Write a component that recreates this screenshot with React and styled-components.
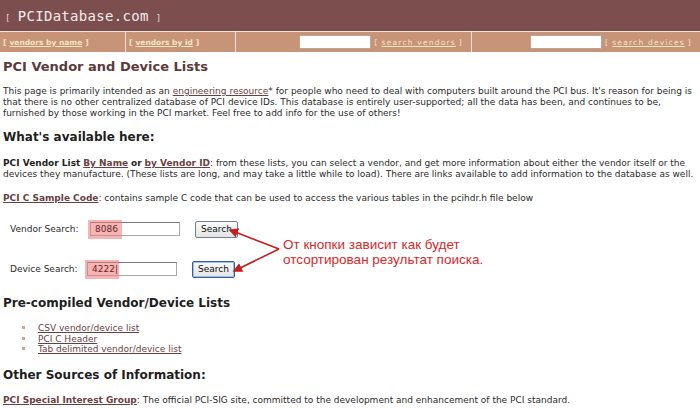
import React from 'react';
import styled, { createGlobalStyle } from 'styled-components';

const GlobalStyle = createGlobalStyle`
    html, body { margin: 0; padding: 0; background: #fff; }
    body {
        font-family: "DejaVu Sans", Verdana, sans-serif;
        font-size: 9px;
        color: #2b2b2b;
    }
`;

const Header = styled.div`
    height: 31px;
    background: #7d4e4e;
    border-bottom: 1px solid #efe3dc;
    display: flex;
    align-items: center;
    padding-left: 5px;
    color: #f4ecec;
`;

const Logo = styled.span`
    font-family: "DejaVu Sans Mono", "Liberation Mono", monospace;
    font-size: 14px;
    letter-spacing: 0.3px;
    & b {
        font-weight: normal;
        font-size: 9px;
        color: #e6d6d6;
        margin: 0 7px;
    }
    & b:first-child { margin-left: 0; }
`;

const Nav = styled.div`
    display: grid;
    grid-template-columns: 125px 109px 235px 1fr;
    column-gap: 1px;
    background: #efe3dc;
    height: 20px;
`;

const NavCell = styled.div`
    background: #c89478;
    display: flex;
    align-items: center;
    justify-content: ${p => (p.$right ? 'flex-end' : 'flex-start')};
    padding: 0 ${p => (p.$right ? '8px' : '3px')};
    font-size: 7.5px;
    font-weight: ${p => (p.$wide ? 'normal' : 'bold')};
    letter-spacing: ${p => (p.$wide ? '1.2px' : '0')};
    color: #f6e6bd;
    white-space: nowrap;
`;

const NavLink = styled.a`
    color: #f6e6bd;
    text-decoration: underline;
    margin: 0 3px;
`;

const NavInput = styled.div`
    width: 70px;
    height: 12px;
    background: #fff;
    border: 1px solid #b9a49a;
    margin-right: 3px;
`;

const Main = styled.div`
    padding: 0 3px;
`;

const Title = styled.h1`
    margin: 7px 0 0;
    font-size: 13px;
    line-height: 16px;
    color: #5b3a3a;
`;

const Heading = styled.h2`
    margin: ${p => p.$top || '12px'} 0 0;
    font-size: 12px;
    line-height: 16px;
    color: #1e1e1e;
`;

const Para = styled.p`
    margin: ${p => p.$top || '10px'} 0 0;
    line-height: 11px;
`;

const Strong = styled.b`
    font-weight: bold;
    color: #1e1e1e;
`;

const Link = styled.a`
    color: #6a3f3f;
    text-decoration: underline;
    font-weight: ${p => (p.$bold ? 'bold' : 'normal')};
`;

const SearchBlock = styled.div`
    position: relative;
    margin-top: 17px;
    display: grid;
    row-gap: 24px;
`;

const SearchRow = styled.div`
    display: flex;
    align-items: center;
    padding-left: 7px;
    height: 16px;
`;

const Label = styled.span`
    width: ${p => p.$w}px;
`;

const Field = styled.div`
    position: relative;
    width: 90px;
    height: 14px;
    border: 1px solid #a9a9a9;
    border-top-color: #7a7a7a;
    background: #fff;
    display: flex;
    align-items: center;
    padding-left: 4px;
    box-sizing: border-box;
    color: #6a2222;
`;

const Highlight = styled.span`
    position: absolute;
    left: -3px;
    top: -3px;
    width: 34px;
    height: 19px;
    background: rgba(238, 120, 120, 0.55);
`;

const FieldText = styled.span`
    position: relative;
`;

const Button = styled.div`
    margin-left: ${p => p.$gap}px;
    height: 15px;
    padding: 0 5px;
    display: flex;
    align-items: center;
    border: 1px solid ${p => (p.$focus ? '#3a5f8f' : '#6f7f8f')};
    border-radius: 2px;
    background: linear-gradient(#fafafa, #e4e4e4);
    box-shadow: ${p => (p.$focus ? 'inset 0 0 0 1px #9fc0e8' : 'none')};
    color: #111;
`;

const Note = styled.div`
    position: absolute;
    left: 280px;
    top: 17px;
    font-family: "Liberation Sans", Arial, sans-serif;
    font-size: 13.5px;
    line-height: 14.5px;
    color: #d42a2a;
`;

const Arrows = styled.svg`
    position: absolute;
    left: 0;
    top: 0;
    overflow: visible;
    pointer-events: none;
`;

const List = styled.ul`
    margin: 12px 0 0;
    padding-left: 35px;
    line-height: 10.5px;
    list-style: none;
`;

const Item = styled.li`
    position: relative;
    &::before {
        content: '';
        position: absolute;
        left: -16px;
        top: 3px;
        width: 3px;
        height: 3px;
        background: #c9a898;
    }
`;

export default function App() {
    return (
        <>
            <GlobalStyle />
            <Header>
                <Logo><b>[</b>PCIDatabase.com<b>]</b></Logo>
            </Header>
            <Nav>
                <NavCell>[<NavLink>vendors by name</NavLink>]</NavCell>
                <NavCell>[<NavLink>vendors by id</NavLink>]</NavCell>
                <NavCell $right $wide><NavInput />[<NavLink>search vendors</NavLink>]</NavCell>
                <NavCell $right $wide><NavInput />[<NavLink>search devices</NavLink>]</NavCell>
            </Nav>
            <Main>
                <Title>PCI Vendor and Device Lists</Title>
                <Para $top="11px">
                    This page is primarily intended as an <Link>engineering resource</Link>* for people who need to deal with computers built around the PCI bus. It's reason for being is that there is no other centralized database of PCI device IDs. This database is entirely user-supported; all the data has been, and continues to be, furnished by those working in the PCI market. Feel free to add info for the use of others!
                </Para>
                <Heading $top="10px">What's available here:</Heading>
                <Para $top="13px">
                    <Strong>PCI Vendor List</Strong> <Link $bold>By Name</Link> <Strong>or</Strong> <Link $bold>by Vendor ID</Link>: from these lists, you can select a vendor, and get more information about either the vendor itself or the devices they manufacture. (These lists are long, and may take a little while to load). There are links available to add information to the database as well.
                </Para>
                <Para $top="13px">
                    <Link $bold>PCI C Sample Code</Link>: contains sample C code that can be used to access the various tables in the pcihdr.h file below
                </Para>
                <SearchBlock>
                    <SearchRow>
                        <Label $w={80}>Vendor Search:</Label>
                        <Field><Highlight /><FieldText>8086</FieldText></Field>
                        <Button $gap={15}>Search</Button>
                    </SearchRow>
                    <SearchRow>
                        <Label $w={77}>Device Search:</Label>
                        <Field><Highlight /><FieldText>4222|</FieldText></Field>
                        <Button $gap={15} $focus>Search</Button>
                    </SearchRow>
                    <Arrows width="1" height="1">
                        <defs>
                            <marker id="head" markerWidth="6" markerHeight="6" refX="5" refY="3" orient="auto">
                                <path d="M0,0 L6,3 L0,6 Z" fill="#c81e1e" />
                            </marker>
                        </defs>
                        <path d="M276,28 L227,9" stroke="#c81e1e" strokeWidth="1.6" fill="none" markerEnd="url(#head)" />
                        <path d="M276,28 L231,50" stroke="#c81e1e" strokeWidth="1.6" fill="none" markerEnd="url(#head)" />
                    </Arrows>
                    <Note>
                        От кнопки зависит как будет<br />
                        отсортирован результат поиска.
                    </Note>
                </SearchBlock>
                <Heading $top="18px">Pre-compiled Vendor/Device Lists</Heading>
                <List>
                    <Item><Link>CSV vendor/device list</Link></Item>
                    <Item><Link>PCI C Header</Link></Item>
                    <Item><Link>Tab delimited vendor/device list</Link></Item>
                </List>
                <Heading $top="12px">Other Sources of Information:</Heading>
                <Para $top="12px">
                    <Link $bold>PCI Special Interest Group</Link>: The official PCI-SIG site, committed to the development and enhancement of the PCI standard.
                </Para>
            </Main>
        </>
    );
}
